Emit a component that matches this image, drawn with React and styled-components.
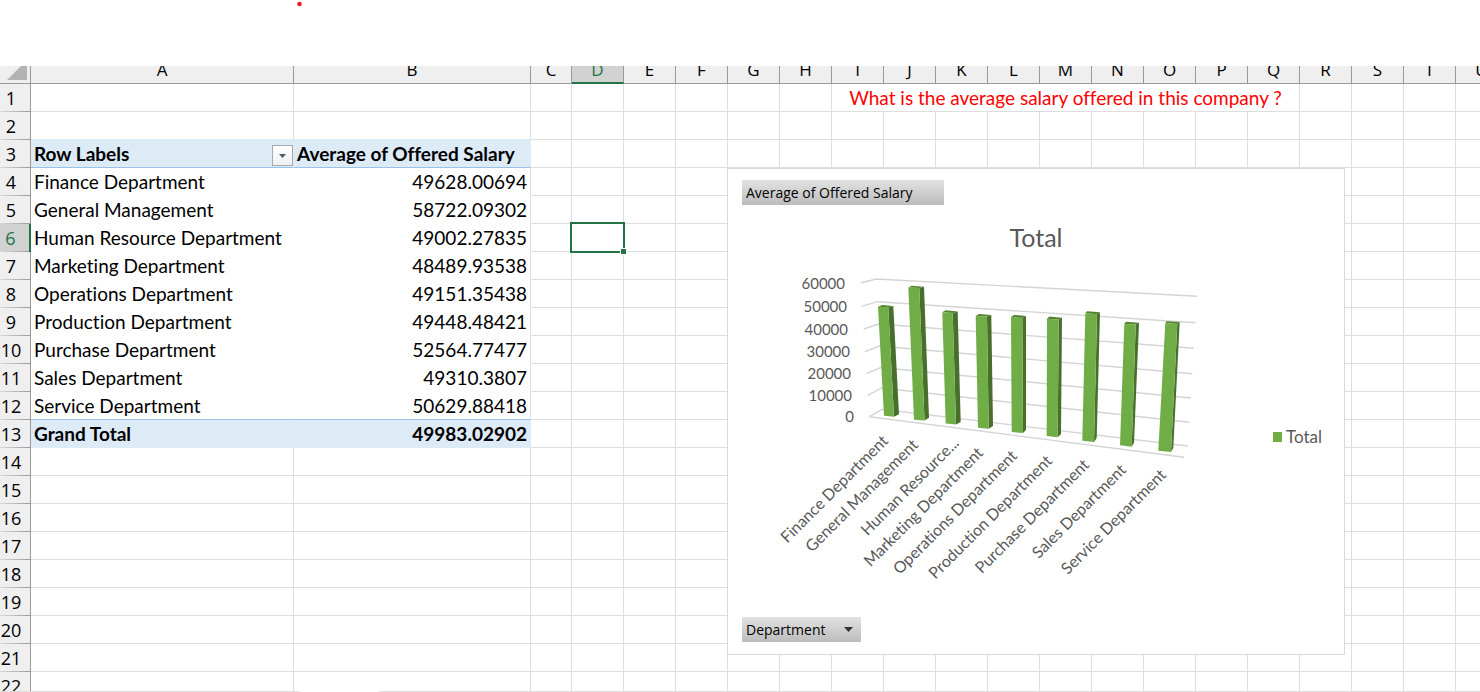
import React from "react";
import styled, { createGlobalStyle, css } from "styled-components";

const GRID = "#dedede";
const HEAD_BG = "#efefef";
const HEAD_LINE = "#999999";
const ACCENT = "#217346";
const PIVOT_BG = "#ddebf7";
const PIVOT_LINE = "#9bc2e6";
const CELL_FONT = `Lato, "Liberation Sans", sans-serif`;
const UI_FONT = `"Open Sans", "Noto Sans", sans-serif`;

const GlobalStyle = createGlobalStyle`
  *, *::before, *::after { box-sizing: border-box; }
  body {
    margin: 0;
    background: #fff;
    color: #000;
    font-family: ${CELL_FONT};
    font-variant-ligatures: none;
  }
`;

const Page = styled.main`
  overflow-x: hidden;
`;

const TopStrip = styled.header`
  height: 66px;
  padding-left: 297px;
`;

const RedDot = styled.svg`
  display: block;
  width: 5px;
  height: 7px;
`;

const Sheet = styled.section`
  position: relative;
  overflow: hidden;
`;

const Grid = styled.table`
  width: 100%;
  min-width: 1508px;
  table-layout: fixed;
  border-collapse: separate;
  border-spacing: 0;
  font-size: 19px;
  line-height: 27px;
`;

const Col = styled.col`
  width: ${(p) => (p.$w ? `${p.$w}px` : "auto")};
`;

const Corner = styled.td`
  height: 18px;
  padding: 0;
  background: ${HEAD_BG};
  border-right: 1px solid ${HEAD_LINE};
  border-bottom: 1px solid ${HEAD_LINE};
`;

const CornerMark = styled.svg`
  display: block;
  width: 30px;
  height: 17px;
`;

const ColHead = styled.th`
  height: 18px;
  padding: 0;
  font: 400 17px/20px ${UI_FONT};
  color: ${(p) => (p.$active ? ACCENT : "#000")};
  background: ${(p) => (p.$active ? "#d2d2d2" : HEAD_BG)};
  border-right: 1px solid ${HEAD_LINE};
  border-bottom: ${(p) => (p.$active ? `2px solid ${ACCENT}` : `1px solid ${HEAD_LINE}`)};
`;

const ColLetter = styled.div`
  display: flex;
  flex-direction: column;
  align-items: center;
  justify-content: flex-end;
  height: ${(p) => (p.$active ? 16 : 17)}px;
  padding-bottom: ${(p) => (p.$active ? 2 : 3)}px;
  overflow: hidden;
`;

const RowHead = styled.th`
  height: ${(p) => (p.$cut ? 19 : 28)}px;
  padding: 0 8px 0 0;
  font: 400 18px/28px ${UI_FONT};
  vertical-align: top;
  color: ${(p) => (p.$active ? ACCENT : "#000")};
  border-right: ${(p) => (p.$active ? `2px solid ${ACCENT}` : `1px solid ${HEAD_LINE}`)};
  background: ${(p) =>
    p.$cut
      ? HEAD_BG
      : `linear-gradient(90deg, #dadada, ${HEAD_LINE}) 0 100% / 100% 1px no-repeat ${
          p.$active ? "#d2d2d2" : HEAD_BG
        }`};
`;

const RowNumber = styled.div`
  display: flex;
  justify-content: center;
  height: ${(p) => (p.$cut ? 19 : 28)}px;
  overflow: hidden;
`;

const Cell = styled.td`
  position: relative;
  padding: 0 3px;
  white-space: nowrap;
  vertical-align: top;
  border-right: 1px solid ${GRID};
  border-bottom: ${(p) => (p.$cut ? "0" : `1px solid ${GRID}`)};
`;

const Question = styled(Cell)`
  text-align: center;
  color: #f00;
`;

const PivotCell = styled(Cell)`
  text-align: ${(p) => (p.$num ? "right" : "left")};
  border-right-color: ${(p) => (p.$num ? GRID : "transparent")};
  border-bottom-color: ${(p) => (p.$last ? PIVOT_LINE : "transparent")};
`;

const PivotBand = styled(PivotCell)`
  font-weight: 700;
  background: ${PIVOT_BG};
  border-right-color: ${PIVOT_BG};
  border-bottom-color: ${(p) => (p.$head ? PIVOT_LINE : PIVOT_BG)};
  ${(p) =>
    p.$head &&
    css`
      text-align: left;
      box-shadow: 0 -1px 0 ${PIVOT_BG};
    `}
`;

const LabelBar = styled.div`
  display: flex;
  align-items: center;
  justify-content: space-between;
  margin-right: -3px;
`;

const FilterButton = styled.button`
  display: grid;
  place-items: center;
  width: 21px;
  height: 21px;
  margin-top: 4px;
  padding: 0;
  border: 1px solid #a6aab0;
  background: linear-gradient(#fff, #eef0f4);
`;

const SelectedCell = styled(Cell)`
  &::before {
    content: "";
    position: absolute;
    z-index: 1;
    inset: -2px;
    border: 2px solid ${ACCENT};
  }
  &::after {
    content: "";
    position: absolute;
    z-index: 2;
    right: -4px;
    bottom: -4px;
    width: 7px;
    height: 7px;
    background: ${ACCENT};
    border: 1px solid #fff;
  }
`;

const SheetEdge = styled.div`
  height: 1px;
  background: linear-gradient(90deg, ${GRID} 296px, #fff 302px, #fff 376px, ${GRID} 382px);
`;

const ChartCard = styled.figure`
  position: absolute;
  z-index: 3;
  top: 102px;
  left: 727px;
  width: 618px;
  margin: 0;
  padding: 11px 14px 12px;
  display: flex;
  flex-direction: column;
  align-items: flex-start;
  background: #fff;
  border: 1px solid #d9d9d9;
  color: #595959;
`;

const FieldButton = styled.button`
  display: flex;
  align-items: center;
  justify-content: space-between;
  width: ${(p) => p.$w}px;
  height: 25px;
  padding: 0 8px 0 4px;
  border: 0;
  color: #000;
  font: 400 14px/24px ${UI_FONT};
  white-space: nowrap;
  background: linear-gradient(#e2e2e2, #bcbcbc);
`;

const ChartTitle = styled.figcaption`
  align-self: stretch;
  margin-top: 16px;
  font-size: 25px;
  line-height: 32px;
  text-align: center;
`;

const ChartBody = styled.div`
  display: flex;
  align-items: center;
  gap: 43px;
`;

const Plot = styled.svg`
  display: block;
  width: 488px;
  height: 364px;
  font-family: ${CELL_FONT};
  fill: #595959;
`;

const Legend = styled.div`
  display: flex;
  align-items: center;
  gap: 4px;
  padding-top: 4px;
  font-size: 17px;
  line-height: 20px;
`;

const Swatch = styled.span`
  width: 9px;
  height: 10px;
  background: #70ad47;
`;

const COLUMNS = "ABCDEFGHIJKLMNOPQRSTU".split("");
const WIDTHS = { A: 263, B: 237, C: 41, U: 0 };
const ROWS = Array.from({ length: 22 }, (_, i) => i + 1);

const PIVOT = {
  4: ["Finance Department", "49628.00694"],
  5: ["General Management", "58722.09302"],
  6: ["Human Resource Department", "49002.27835"],
  7: ["Marketing Department", "48489.93538"],
  8: ["Operations Department", "49151.35438"],
  9: ["Production Department", "49448.48421"],
  10: ["Purchase Department", "52564.77477"],
  11: ["Sales Department", "49310.3807"],
  12: ["Service Department", "50629.88418"],
};

/* Axis value, label end, wall line: front edge, corner, far end. */
const LEVELS = [
  ["60000", 845, 289, "860.7,282.7 876.7,279 1197,296.3"],
  ["50000", 847, 312, "861.7,306.3 877.3,301.7 1195.5,322.7"],
  ["40000", 848, 335, "863.7,329 878.7,324 1193.8,348.3"],
  ["30000", 850, 357, "865,351.7 879.5,346 1192.3,373.7"],
  ["20000", 851, 379, "866.7,373.3 880.7,367.5 1190.7,398"],
  ["10000", 852, 401, "867.7,395.3 881.5,388 1189.7,422.3"],
  ["0", 854, 422, "869.3,416.7 882,409.3 1187.7,446"],
];

/* Corners of each bar: front TL, TR, BR, BL, side top, side bottom, back TL. */
const BARS = [
  [[878, 306.7], [888.3, 307.2], [894, 416.7], [884, 415.7], [893.3, 305.9], [899, 414.3], [882, 304.9]],
  [[908.3, 287.5], [919.3, 288], [924.5, 420.5], [914, 419.7], [924, 286.7], [929, 417.7], [911.7, 285.7]],
  [[942.3, 312.3], [952.7, 313], [956, 424.5], [945.7, 423.5], [957.7, 311.5], [960.7, 422], [945.7, 310.3]],
  [[975.7, 316], [987, 316.6], [988.7, 428.7], [978, 427.7], [991.3, 315], [993, 426], [979, 314]],
  [[1011, 317], [1022.3, 317.9], [1023, 433], [1011.7, 432], [1026, 316], [1026, 429.7], [1014, 314.9]],
  [[1047, 318.7], [1058.7, 319.6], [1057.7, 437.3], [1046.7, 436], [1062, 317.7], [1061, 434], [1049.3, 316.5]],
  [[1085.3, 313.3], [1097, 314.2], [1094, 442], [1082.3, 440.7], [1100, 312.3], [1096.7, 438], [1087, 311.3]],
  [[1124.3, 324], [1135.7, 324.6], [1131.7, 446.7], [1120, 445.3], [1139, 322.7], [1134, 442.7], [1126, 321.7]],
  [[1165.3, 323], [1177.3, 323.9], [1171, 452], [1158.3, 450.7], [1179.7, 322], [1173.3, 448], [1166.7, 321.3]],
];

const CATEGORIES = [
  ["Finance Department", 889, 442],
  ["General Management", 919, 446],
  ["Human Resource...", 960, 444],
  ["Marketing Department", 984, 454],
  ["Operations Department", 1018, 457],
  ["Production Department", 1053, 462],
  ["Purchase Department", 1090, 466],
  ["Sales Department", 1127, 471],
  ["Service Department", 1167, 476],
];

const pts = (...p) => p.map((q) => q.join(",")).join(" ");

function Bar({ corners: [tl, tr, br, bl, st, sb, back] }) {
  return (
    <g>
      <polygon points={pts(tl, back, st, tr)} fill="#54832f" />
      <polygon points={pts(tr, st, sb, br)} fill="#486f2c" />
      <polygon points={pts(tl, tr, br, bl)} fill="#70ad47" />
    </g>
  );
}

function Chart() {
  return (
    <ChartCard>
      <FieldButton type="button" $w={202}>Average of Offered Salary</FieldButton>
      <ChartTitle>Total</ChartTitle>
      <ChartBody>
        <Plot viewBox="742 253 488 364" role="img" aria-label="Average offered salary by department">
          <g fill="none" stroke="#d4d4d4" strokeWidth="1.4">
            {LEVELS.map(([v, , , line]) => <polyline key={v} points={line} />)}
            <line x1="869.3" y1="416.7" x2="1184" y2="457.3" />
          </g>
          {BARS.map((c, i) => <Bar key={i} corners={c} />)}
          <g fontSize="15" textAnchor="end">
            {LEVELS.map(([v, x, y]) => <text key={v} x={x} y={y}>{v}</text>)}
          </g>
          <g fontSize="16" textAnchor="end">
            {CATEGORIES.map(([name, x, y]) => (
              <text key={name} transform={`translate(${x} ${y}) rotate(-45)`}>{name}</text>
            ))}
          </g>
        </Plot>
        <Legend><Swatch />Total</Legend>
      </ChartBody>
      <FieldButton type="button" $w={119}>
        Department
        <svg width="9" height="5" viewBox="0 0 9 5" aria-hidden="true"><path d="M0 0h9L4.5 5z" fill="#333" /></svg>
      </FieldButton>
    </ChartCard>
  );
}

function renderCell(row, col) {
  const cut = row === 22;
  if (row === 1 && col === "I") {
    return <Question key={col} colSpan={9}>What is the average salary offered in this company ?</Question>;
  }
  if (row === 1 && col > "I" && col <= "Q") return null;
  if (row === 3 && col === "A") {
    return (
      <PivotBand key={col} $head>
        <LabelBar>
          Row Labels
          <FilterButton type="button" aria-label="Filter row labels">
            <svg width="7" height="4" viewBox="0 0 7 4" aria-hidden="true"><path d="M0 0h7L3.5 4z" fill="#555" /></svg>
          </FilterButton>
        </LabelBar>
      </PivotBand>
    );
  }
  if (row === 3 && col === "B") return <PivotBand key={col} $head>Average of Offered Salary</PivotBand>;
  if (row === 13 && col === "A") return <PivotBand key={col}>Grand Total</PivotBand>;
  if (row === 13 && col === "B") return <PivotBand key={col} $num>49983.02902</PivotBand>;
  if (PIVOT[row] && col <= "B") {
    return (
      <PivotCell key={col} $num={col === "B"} $last={row === 12}>
        {PIVOT[row][col === "A" ? 0 : 1]}
      </PivotCell>
    );
  }
  if (row === 6 && col === "D") return <SelectedCell key={col} />;
  return <Cell key={col} $cut={cut} />;
}

export default function App() {
  return (
    <Page>
      <GlobalStyle />
      <TopStrip>
        <RedDot viewBox="0 0 5 7" aria-hidden="true"><circle cx="2.5" cy="4" r="2.3" fill="#ed1c24" /></RedDot>
      </TopStrip>
      <Sheet>
        <Grid>
          <colgroup>
            <Col $w={31} />
            {COLUMNS.map((c) => <Col key={c} $w={WIDTHS[c] ?? 52} />)}
          </colgroup>
          <thead>
            <tr>
              <Corner>
                <CornerMark viewBox="0 0 30 17" aria-hidden="true"><path d="M7 14L21 0H27V14z" fill="#b3b3b3" /></CornerMark>
              </Corner>
              {COLUMNS.map((c) => (
                <ColHead key={c} scope="col" $active={c === "D"}>
                  <ColLetter $active={c === "D"}>{c}</ColLetter>
                </ColHead>
              ))}
            </tr>
          </thead>
          <tbody>
            {ROWS.map((r) => (
              <tr key={r}>
                <RowHead scope="row" $active={r === 6} $cut={r === 22}>
                  <RowNumber $cut={r === 22}>{r}</RowNumber>
                </RowHead>
                {COLUMNS.map((c) => renderCell(r, c))}
              </tr>
            ))}
          </tbody>
        </Grid>
        <SheetEdge />
        <Chart />
      </Sheet>
    </Page>
  );
}
